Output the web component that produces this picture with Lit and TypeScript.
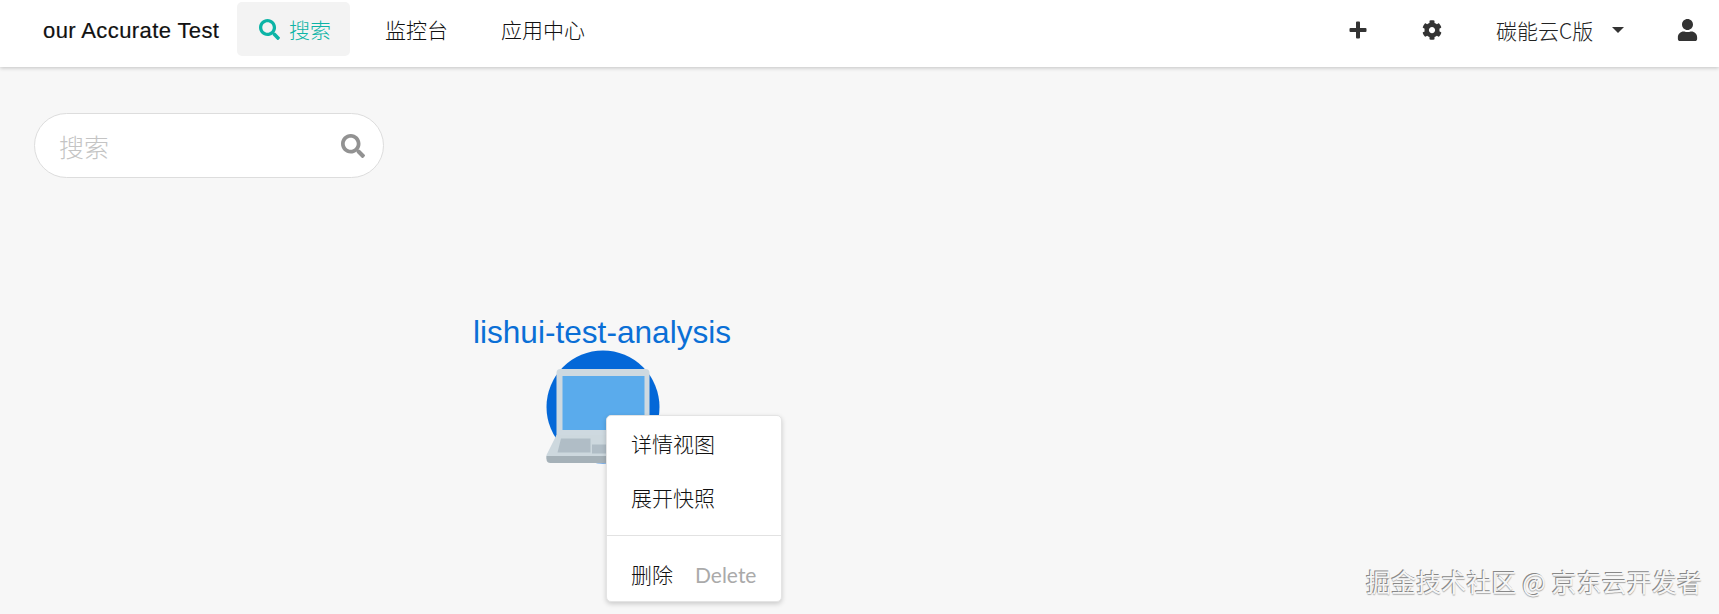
import { LitElement, html, css, svg } from "lit";
import { customElement } from "lit/decorators.js";

const searchIcon = (cls: string) => html`<svg class=${cls} viewBox="0 0 512 512"><path fill="currentColor" d="M505 442.700L405.300 343c-4.500-4.500-10.600-7-17-7H372c27.600-35.300 44-79.700 44-128C416 93.100 322.900 0 208 0S0 93.100 0 208s93.100 208 208 208c48.300 0 92.700-16.400 128-44v16.300c0 6.400 2.500 12.500 7 17l99.700 99.700c9.400 9.400 24.600 9.400 33.900 0l28.300-28.300c9.400-9.400 9.400-24.600.1-34zM208 336c-70.700 0-128-57.200-128-128 0-70.700 57.200-128 128-128 70.700 0 128 57.200 128 128 0 70.700-57.200 128-128 128z"/></svg>`;

@customElement("app-root")
export class AppRoot extends LitElement {
  static styles = css`
    :host { display: block; width: 1719px; height: 614px; position: relative; overflow: hidden; background: #f7f7f7;
      font-family: "Liberation Sans", "Noto Sans CJK SC", sans-serif; color: #333; }
    .nav { height: 67px; background: #fff; box-shadow: 0 1px 4px rgba(0,0,0,.22); display: flex; align-items: center; padding-left: 43px; }
    .logo { font-size: 22px; color: #111; width: 194px; letter-spacing: .4px; white-space: nowrap; margin-top: -6px; -webkit-text-stroke: .2px #111; }
    .item { height: 54px; margin-top: -9px; display: flex; align-items: center; gap: 9px; font-size: 21px; border-radius: 5px; font-family: "Noto Sans CJK SC", sans-serif; font-weight: 300; color: #111; white-space: nowrap; }
    .item.active { background: #f3f3f3; color: #0cb4a6; width: 113px; box-sizing: border-box; padding-left: 22px; margin-right: 35px; }
    .item.plain { margin-right: 53px; }
    .nav-icon { width: 21px; height: 21px; }
    .spacer { flex: 1; }
    .right { display: flex; align-items: center; margin-top: -8px; color: #333; }
    .plus { width: 18px; height: 18px; margin-right: 55px; }
    .gear { width: 20px; height: 20px; margin-right: 54px; }
    .ver { font-size: 21px; width: 116px; font-family: "Noto Sans CJK SC", sans-serif; font-weight: 300; color: #222; white-space: nowrap; }
    .caret { width: 0; height: 0; border: 6px solid transparent; border-top: 6px solid #333; border-bottom: 0; margin-right: 53px; }
    .user { width: 21px; height: 22px; margin-right: 21px; }
    .search { margin: 46px 0 0 34px; width: 350px; height: 65px; box-sizing: border-box; background: #fff; border: 1px solid #ddd; border-radius: 33px; display: flex; align-items: center; justify-content: space-between; padding: 0 18px 0 24px; }
    .search span { font-size: 25px; color: #c4c4c4; font-family: "Noto Sans CJK SC", sans-serif; font-weight: 300; }
    .search svg { width: 24px; height: 24px; color: #929292; }
    .node { position: absolute; left: 473px; top: 315px; width: 258px; display: flex; flex-direction: column; align-items: center; }
    .title { font-size: 31.600px; line-height: 35px; color: #0a6fd6; white-space: nowrap; }
    .pc { width: 116px; height: 116px; display: block; margin-left: 1px; }
    .menu { position: absolute; left: 606px; top: 415px; width: 176px; height: 187px; box-sizing: border-box; background: #fff; border-radius: 5px; border: 1px solid #e4e4e4; box-shadow: 0 2px 5px rgba(0,0,0,.18); font-family: "Noto Sans CJK SC", sans-serif; font-weight: 300; font-size: 21px; color: #111; }
    .mi { height: 54px; display: flex; align-items: center; padding-left: 24px; }
    .sep { height: 1px; background: #e2e2e2; margin: 11px 0 17px; }
    .mi.del { gap: 22px; height: 42px; }
    .mi.del em { font-style: normal; color: #aaa; font-family: Lato, sans-serif; font-size: 21px; font-weight: 400; }
    .wm { position: absolute; left: 1366px; top: 565px; font-size: 25.100px; line-height: 32px; color: #f6f6f6; font-family: "Noto Sans CJK SC", sans-serif; white-space: nowrap; text-shadow: -1px -1px 0 #888, 0 1px 1px #aaa; }
  `;

  render() {
    return html`
      <div class="nav">
        <div class="logo">our Accurate Test</div>
        <div class="item active">${searchIcon("nav-icon")}<span>搜索</span></div>
        <div class="item plain">监控台</div>
        <div class="item">应用中心</div>
        <div class="spacer"></div>
        <div class="right">
          <svg class="plus" viewBox="0 0 18 18"><path fill="currentColor" d="M7 1.500a1 1 0 0 1 1-1h2a1 1 0 0 1 1 1V7h5.500a1 1 0 0 1 1 1v2a1 1 0 0 1-1 1H11v5.500a1 1 0 0 1-1 1H8a1 1 0 0 1-1-1V11H1.500a1 1 0 0 1-1-1V8a1 1 0 0 1 1-1H7z"/></svg>
          <svg class="gear" viewBox="0 0 512 512"><path fill="currentColor" d="M487.400 315.700l-42.600-24.600c4.300-23.200 4.300-47 0-70.200l42.600-24.600c4.900-2.800 7.100-8.600 5.500-14-11.100-35.600-30-67.800-54.700-94.600-3.800-4.100-10-5.100-14.800-2.300L380.800 110c-17.900-15.400-38.500-27.300-60.800-35.100V25.800c0-5.600-3.900-10.500-9.400-11.700-36.700-8.200-74.300-7.800-109.200 0-5.500 1.200-9.400 6.100-9.400 11.700V75c-22.200 7.900-42.800 19.800-60.800 35.100L88.700 85.500c-4.900-2.800-11-1.900-14.800 2.300-24.700 26.700-43.600 58.900-54.700 94.600-1.700 5.400.6 11.200 5.500 14L67.300 221c-4.300 23.200-4.300 47 0 70.200l-42.600 24.600c-4.900 2.800-7.100 8.600-5.500 14 11.100 35.600 30 67.800 54.700 94.600 3.800 4.100 10 5.100 14.800 2.300l42.600-24.600c17.900 15.400 38.500 27.300 60.800 35.100v49.200c0 5.600 3.900 10.500 9.400 11.700 36.700 8.200 74.300 7.800 109.200 0 5.500-1.200 9.400-6.100 9.400-11.700v-49.200c22.200-7.900 42.800-19.800 60.800-35.100l42.600 24.600c4.900 2.800 11 1.900 14.800-2.300 24.700-26.700 43.600-58.900 54.700-94.600 1.500-5.500-.7-11.300-5.600-14.100zM256 336c-44.100 0-80-35.900-80-80s35.900-80 80-80 80 35.900 80 80-35.900 80-80 80z"/></svg>
          <div class="ver">碳能云C版</div>
          <div class="caret"></div>
          <svg class="user" viewBox="0 0 448 512"><path fill="currentColor" d="M224 256c70.700 0 128-57.300 128-128S294.700 0 224 0 96 57.300 96 128s57.300 128 128 128zm89.600 32h-16.700c-22.200 10.200-46.900 16-72.900 16s-50.600-5.800-72.900-16h-16.700C60.200 288 0 348.200 0 422.400V464c0 26.500 21.500 48 48 48h352c26.500 0 48-21.500 48-48v-41.600c0-74.200-60.200-134.400-134.400-134.400z"/></svg>
        </div>
      </div>
      <div class="search"><span>搜索</span>${searchIcon("")}</div>
      <div class="node">
        <div class="title">lishui-test-analysis</div>
        <svg class="pc" viewBox="0 0 116 116">
          ${svg`<circle cx="58" cy="57" r="56.500" fill="#0468d8"/>
          <path d="M11.500 23a4 4 0 0 1 4-4h85a4 4 0 0 1 4 4v63h-93z" fill="#ced9e0"/>
          <rect x="17.500" y="26" width="82" height="54" fill="#5aabec"/>
          <path d="M11.500 85h93l9.500 20q.5 3 0 4H1.500q-.5-1 0-4z" fill="#cdd8de"/>
          <path d="M1.500 106h113v3a4 4 0 0 1-4 4H5.500a4 4 0 0 1-4-4z" fill="#a5b1b8"/>
          <path d="M16 88.500h29.500v14H12.500z" fill="#b0bdc6"/>
          <path d="M47 94.500h36v9H47z" fill="#b0bdc6"/>`}
        </svg>
      </div>
      <div class="menu">
        <div class="mi">详情视图</div>
        <div class="mi">展开快照</div>
        <div class="sep"></div>
        <div class="mi del"><span>删除</span><em>Delete</em></div>
      </div>
      <div class="wm">掘金技术社区 @ 京东云开发者</div>
    `;
  }
}
